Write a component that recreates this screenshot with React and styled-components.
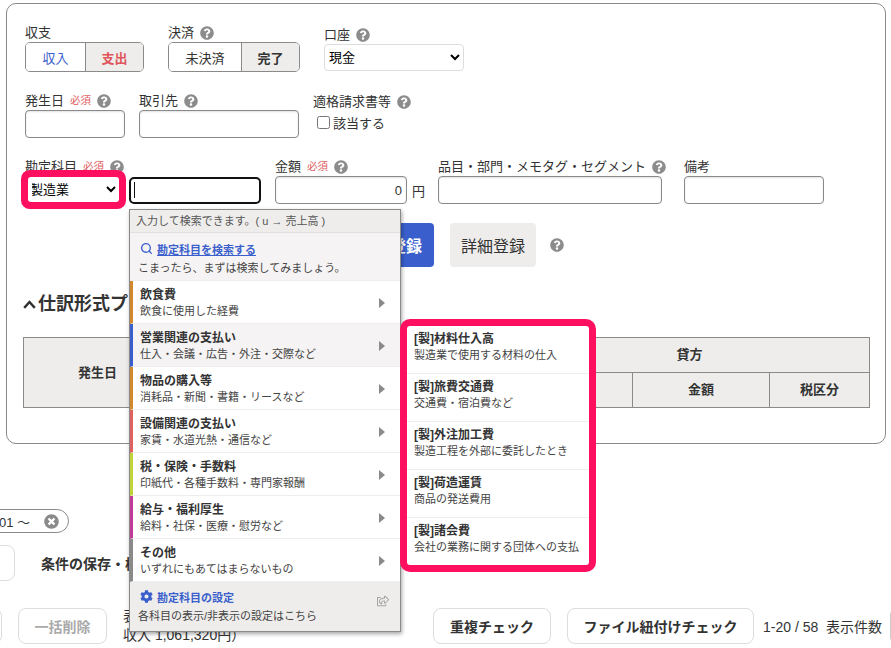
import React from 'react'
import styled, { createGlobalStyle } from 'styled-components'
import { FaQuestionCircle, FaCog, FaTimesCircle, FaRegShareSquare } from 'react-icons/fa'
import { Search } from 'lucide-react'

const categories = [
  { title: '飲食費', sub: '飲食に使用した経費', color: '#d1892c' },
  { title: '営業関連の支払い', sub: '仕入・会議・広告・外注・交際など', color: '#3a5fcd', active: true },
  { title: '物品の購入等', sub: '消耗品・新聞・書籍・リースなど', color: '#d1892c' },
  { title: '設備関連の支払い', sub: '家賃・水道光熱・通信など', color: '#e0605f' },
  { title: '税・保険・手数料', sub: '印紙代・各種手数料・専門家報酬', color: '#bfd437' },
  { title: '給与・福利厚生', sub: '給料・社保・医療・慰労など', color: '#c23a96' },
  { title: 'その他', sub: 'いずれにもあてはまらないもの', color: '#8a8a8a' },
]

const subItems = [
  { title: '[製]材料仕入高', sub: '製造業で使用する材料の仕入' },
  { title: '[製]旅費交通費', sub: '交通費・宿泊費など' },
  { title: '[製]外注加工費', sub: '製造工程を外部に委託したとき' },
  { title: '[製]荷造運賃', sub: '商品の発送費用' },
  { title: '[製]諸会費', sub: '会社の業務に関する団体への支払' },
]

const App = () => {
  return (
    <>
      <GlobalStyle />
      <Page>
        <Panel>
          <FormRow $gap={24}>
            <Field $top={1}>
              <Label>収支</Label>
              <Toggle>
                <ToggleItem $w={59} $color='#3a5fcd'>収入</ToggleItem>
                <ToggleItem $w={58} $on $color='#e0555a'>支出</ToggleItem>
              </Toggle>
            </Field>
            <Field $top={1}>
              <Label>決済 <Help /></Label>
              <Toggle>
                <ToggleItem $w={72}>未決済</ToggleItem>
                <ToggleItem $w={58} $on>完了</ToggleItem>
              </Toggle>
            </Field>
            <Field $top={3}>
              <Label>口座 <Help /></Label>
              <AccountSelect defaultValue='現金'>
                <option>現金</option>
              </AccountSelect>
            </Field>
          </FormRow>

          <FormRow $gap={14}>
            <Field>
              <Label>発生日 <Required>必須</Required> <Help /></Label>
              <TextInput $w={100} />
            </Field>
            <Field>
              <Label>取引先 <Help /></Label>
              <TextInput $w={160} />
            </Field>
            <Field $top={1}>
              <Label>適格請求書等 <Help /></Label>
              <CheckLine>
                <input type='checkbox' />
                該当する
              </CheckLine>
            </Field>
          </FormRow>

          <FormRow $gap={0}>
            <Field $w={104}>
              <Label>勘定科目 <Required>必須</Required> <Help /></Label>
              <CategorySelect defaultValue='製造業'>
                <option>製造業</option>
              </CategorySelect>
            </Field>
            <Field $w={146}>
              <Label />
              <FocusInput />
            </Field>
            <Field $w={163}>
              <Label>金額 <Required>必須</Required> <Help /></Label>
              <AmountLine>
                <AmountInput defaultValue='0' />
                円
              </AmountLine>
            </Field>
            <Field $w={246}>
              <Label>品目・部門・メモタグ・セグメント <Help /></Label>
              <TextInput $w={224} />
            </Field>
            <Field>
              <Label>備考</Label>
              <TextInput $w={140} />
            </Field>
          </FormRow>

          <ActionRow>
            <PrimaryButton>登録</PrimaryButton>
            <SecondaryButton>詳細登録</SecondaryButton>
            <Help />
          </ActionRow>

          <PreviewHeading>
            <svg width='13' height='9' viewBox='0 0 13 9' fill='none'>
              <path d='M1.2 7.8 L6.5 2 L11.8 7.8' stroke='#333' strokeWidth='2.5' />
            </svg>
            仕訳形式プレビュー
          </PreviewHeading>

          <PreviewTable>
            <colgroup>
              <col width='148' />
              <col width='123' />
              <col width='115' />
              <col width='100' />
              <col width='123' />
              <col width='137' />
              <col width='100' />
            </colgroup>
            <thead>
              <tr>
                <th rowSpan='2'>発生日</th>
                <th colSpan='3'>借方</th>
                <th colSpan='3'>貸方</th>
              </tr>
              <tr>
                <th>勘定科目</th>
                <th>金額</th>
                <th>税区分</th>
                <th>勘定科目</th>
                <th>金額</th>
                <th>税区分</th>
              </tr>
            </thead>
          </PreviewTable>
        </Panel>

        <FilterChip>
          2023/01/01 〜
          <FaTimesCircle size={15} color='#8a8a8a' />
        </FilterChip>

        <ConditionRow>
          <GhostButton $w={60} />
          <ConditionText>条件の保存・検索</ConditionText>
        </ConditionRow>

        <BottomRow>
          <GhostButton $w={60} />
          <GhostButton $w={89} $muted>一括削除</GhostButton>
          <Totals>
            表示中の合計（支出 0円
            <br />
            収入 1,061,320円）
          </Totals>
          <GhostButton $w={118}>重複チェック</GhostButton>
          <GhostButton $w={187}>ファイル紐付けチェック</GhostButton>
          <PageInfo>1-20 / 58&nbsp;&nbsp;表示件数</PageInfo>
          <PerPage />
        </BottomRow>

        <Popup>
          <PopupHint>入力して検索できます。( u → 売上高 )</PopupHint>
          <PopupSection>
            <PopupLink $underline>
              <Search size={13} strokeWidth={2.5} />
              <span>勘定科目を検索する</span>
            </PopupLink>
            <PopupNote>こまったら、まずは検索してみましょう。</PopupNote>
          </PopupSection>
          {categories.map((c) => (
            <CategoryRow key={c.title} $color={c.color} $active={c.active}>
              <div>
                <RowTitle>{c.title}</RowTitle>
                <RowSub>{c.sub}</RowSub>
              </div>
              <Caret />
            </CategoryRow>
          ))}
          <PopupFooter>
            <PopupLink>
              <FaCog size={13} />
              <span>勘定科目の設定</span>
            </PopupLink>
            <PopupNote>各科目の表示/非表示の設定はこちら</PopupNote>
            <ShareIcon>
              <FaRegShareSquare size={12} />
            </ShareIcon>
          </PopupFooter>

          <SubMenu>
            {subItems.map((s) => (
              <SubItem key={s.title}>
                <RowTitle>{s.title}</RowTitle>
                <RowSub>{s.sub}</RowSub>
              </SubItem>
            ))}
          </SubMenu>
        </Popup>
      </Page>
    </>
  )
}

const Help = () => <FaQuestionCircle size={14} color='#8c8c8c' />

const GlobalStyle = createGlobalStyle`
  html, body {
    margin: 0;
    height: 648px;
    overflow: hidden;
    background: #fff;
  }
  body, input, select, button, table {
    font-family: "Liberation Sans", "Noto Sans CJK JP", sans-serif;
  }
`
const Page = styled.div`
  position: relative;
  width: 891px;
  height: 648px;
  padding-top: 3px;
  box-sizing: border-box;
  overflow: hidden;
  color: #333;
  font-size: 13px;
`
const Panel = styled.div`
  margin-left: 6px;
  width: 880px;
  height: 441px;
  box-sizing: border-box;
  border: 1px solid #8a8a8a;
  border-radius: 10px;
  padding: 18px 18px 0;
`
const FormRow = styled.div`
  display: flex;
  align-items: flex-start;
  gap: ${(p) => p.$gap}px;
  margin-bottom: 19px;
`
const Field = styled.div`
  display: flex;
  flex-direction: column;
  margin-top: ${(p) => p.$top || 0}px;
  width: ${(p) => (p.$w ? `${p.$w}px` : 'auto')};
`
const Label = styled.div`
  display: flex;
  align-items: center;
  gap: 6px;
  height: 19px;
  line-height: 19px;
  flex-shrink: 0;
  font-size: 13px;
  white-space: nowrap;
`
const Required = styled.span`
  color: #e0605f;
  font-size: 10.5px;
`
const Toggle = styled.div`
  display: flex;
  height: 30px;
  box-sizing: border-box;
  border: 1px solid #8a8a8a;
  border-radius: 5px;
  overflow: hidden;
`
const ToggleItem = styled.div`
  width: ${(p) => p.$w}px;
  box-sizing: border-box;
  display: flex;
  align-items: center;
  justify-content: center;
  color: ${(p) => p.$color || '#333'};
  background: ${(p) => (p.$on ? '#eeedeb' : '#fff')};
  font-weight: ${(p) => (p.$on ? 700 : 400)};
  border-left: ${(p) => (p.$on ? '1px solid #8a8a8a' : 'none')};
`
const AccountSelect = styled.select`
  width: 140px;
  height: 27px;
  box-sizing: border-box;
  padding: 0;
  border: 1px solid #ddd;
  border-radius: 4px;
  background: #fff;
  color: #000;
  font-size: 13px;
`
const TextInput = styled.input`
  width: ${(p) => p.$w}px;
  height: 28px;
  box-sizing: border-box;
  border: 1px solid #8a8a8a;
  border-radius: 4px;
  box-shadow: inset 0 1px 2px rgba(0, 0, 0, 0.12);
  outline: none;
`
const CheckLine = styled.label`
  display: flex;
  align-items: center;
  gap: 3px;
  height: 22px;
  padding-left: 4px;
  input {
    margin: 0;
    width: 13px;
    height: 13px;
  }
`
const CategorySelect = styled.select`
  width: 91px;
  height: 25px;
  margin: 1px 0 0 3px;
  box-sizing: border-box;
  padding: 0;
  border: none;
  border-radius: 3px;
  box-shadow: 0 0 0 7px #ff0f5f;
  background: #fff;
  color: #000;
  font-size: 13px;
  text-indent: -2px;
  outline: none;
`
const FocusInput = styled.div`
  width: 132px;
  height: 27px;
  box-sizing: border-box;
  margin-top: 1px;
  border: 2px solid #111;
  border-radius: 5px;
  background: #fff;
  &::before {
    content: '';
    display: block;
    width: 1px;
    height: 16px;
    margin: 3px 0 0 3px;
    background: #111;
  }
`
const AmountLine = styled.div`
  display: flex;
  align-items: center;
  gap: 5px;
`
const AmountInput = styled.input`
  width: 132px;
  height: 28px;
  box-sizing: border-box;
  padding: 0 4px;
  border: 1px solid #8a8a8a;
  border-radius: 4px;
  box-shadow: inset 0 1px 2px rgba(0, 0, 0, 0.12);
  text-align: right;
  font-size: 13px;
  color: #333;
`
const ActionRow = styled.div`
  display: flex;
  align-items: center;
  height: 44px;
  margin-left: 353px;
  svg {
    margin-left: 14px;
  }
`
const PrimaryButton = styled.button`
  width: 56px;
  height: 44px;
  border: none;
  border-radius: 4px;
  background: #3a5fcd;
  color: #fff;
  font-size: 16px;
  font-weight: 700;
  padding: 0;
`
const SecondaryButton = styled.button`
  width: 86px;
  height: 44px;
  margin-left: 16px;
  border: none;
  border-radius: 4px;
  background: #eeedeb;
  color: #333;
  font-size: 16px;
  padding: 0;
`
const PreviewHeading = styled.h2`
  display: flex;
  align-items: center;
  gap: 2px;
  height: 24px;
  margin: 23px 0 23px -2px;
  font-size: 18px;
  font-weight: 700;
  color: #333;
  white-space: nowrap;
  svg {
    margin-top: 5px;
  }
`
const PreviewTable = styled.table`
  width: 846px;
  margin-left: -2px;
  table-layout: fixed;
  border-collapse: collapse;
  th {
    height: 34px;
    line-height: 18px;
    padding: 0;
    border: 1px solid #8a8a8a;
    background: #eeedeb;
    font-size: 13px;
    font-weight: 700;
    color: #333;
  }
`
const FilterChip = styled.div`
  display: flex;
  align-items: center;
  justify-content: flex-end;
  gap: 14px;
  width: 130px;
  height: 24px;
  box-sizing: border-box;
  margin: 65px 0 0 -61px;
  padding-right: 9px;
  border: 1px solid #8a8a8a;
  border-radius: 12px;
  white-space: nowrap;
  font-size: 13px;
  svg {
    flex-shrink: 0;
  }
`
const ConditionRow = styled.div`
  display: flex;
  align-items: center;
  gap: 26px;
  height: 36px;
  margin: 12px 0 0 -45px;
`
const GhostButton = styled.button`
  flex-shrink: 0;
  width: ${(p) => p.$w}px;
  height: 36px;
  box-sizing: border-box;
  padding: 0;
  border: 1px solid #ddd;
  border-radius: 8px;
  background: #fff;
  color: ${(p) => (p.$muted ? '#aaa' : '#333')};
  font-size: 14px;
  font-weight: 700;
`
const ConditionText = styled.span`
  font-size: 14px;
  font-weight: 700;
  white-space: nowrap;
`
const BottomRow = styled.div`
  display: flex;
  align-items: center;
  gap: 16px;
  width: 980px;
  height: 36px;
  margin: 27px 0 0 -58px;
`
const Totals = styled.div`
  width: 294px;
  flex-shrink: 0;
  line-height: 19px;
  font-size: 14px;
  white-space: nowrap;
`
const PageInfo = styled.div`
  margin-left: -7px;
  font-size: 14px;
  white-space: nowrap;
`
const PerPage = styled.div`
  width: 40px;
  height: 30px;
  margin-left: -8px;
  flex-shrink: 0;
  border: 1px solid #ccc;
  border-radius: 4px;
`
const Popup = styled.div`
  position: absolute;
  left: 129px;
  top: 209px;
  width: 272px;
  box-sizing: border-box;
  border: 1px solid #8a8a8a;
  background: #fff;
  box-shadow: 1px 2px 4px rgba(0, 0, 0, 0.35);
`
const PopupHint = styled.div`
  height: 22px;
  line-height: 22px;
  padding-left: 6px;
  background: #eeedeb;
  border-bottom: 1px solid #e2e0de;
  font-size: 11px;
  color: #555;
`
const PopupSection = styled.div`
  height: 48px;
  box-sizing: border-box;
  padding: 7px 8px 0;
  background: #f5f3f3;
  border-bottom: 1px solid #eee;
`
const PopupLink = styled.div`
  display: flex;
  align-items: center;
  gap: 4px;
  height: 17px;
  padding-left: 2px;
  color: #3a5fcd;
  font-size: 11px;
  font-weight: 700;
  span {
    text-decoration: ${(p) => (p.$underline ? 'underline' : 'none')};
  }
`
const PopupNote = styled.div`
  height: 18px;
  line-height: 18px;
  margin-top: 2px;
  font-size: 11px;
  color: #444;
  white-space: nowrap;
`
const CategoryRow = styled.div`
  display: flex;
  align-items: center;
  justify-content: space-between;
  height: 43px;
  box-sizing: border-box;
  padding: 1px 15px 0 7px;
  border-left: 3px solid ${(p) => p.$color};
  border-bottom: 1px solid #eee;
  background: ${(p) => (p.$active ? '#f5f3f3' : '#fff')};
`
const Caret = styled.span`
  width: 0;
  height: 0;
  border-top: 5px solid transparent;
  border-bottom: 5px solid transparent;
  border-left: 6px solid #8a8a8a;
`
const RowTitle = styled.div`
  height: 16px;
  line-height: 16px;
  font-size: 12px;
  font-weight: 700;
  color: #333;
  white-space: nowrap;
`
const RowSub = styled.div`
  height: 16px;
  line-height: 16px;
  font-size: 11px;
  color: #444;
  white-space: nowrap;
`
const PopupFooter = styled.div`
  position: relative;
  height: 49px;
  box-sizing: border-box;
  padding: 6px 8px 0;
  background: #eeedeb;
`
const ShareIcon = styled.span`
  position: absolute;
  right: 11px;
  top: 13px;
  color: #a5a5a5;
`
const SubMenu = styled.div`
  position: absolute;
  left: 270px;
  top: 109px;
  width: 196px;
  height: 253px;
  box-sizing: border-box;
  border: 7px solid #ff0f5f;
  border-radius: 10px;
  background: #fff;
`
const SubItem = styled.div`
  height: 48px;
  box-sizing: border-box;
  padding: 5px 7px 0;
  border-bottom: 1px solid #eee;
  &:last-child {
    border-bottom: none;
  }
`
export default App
